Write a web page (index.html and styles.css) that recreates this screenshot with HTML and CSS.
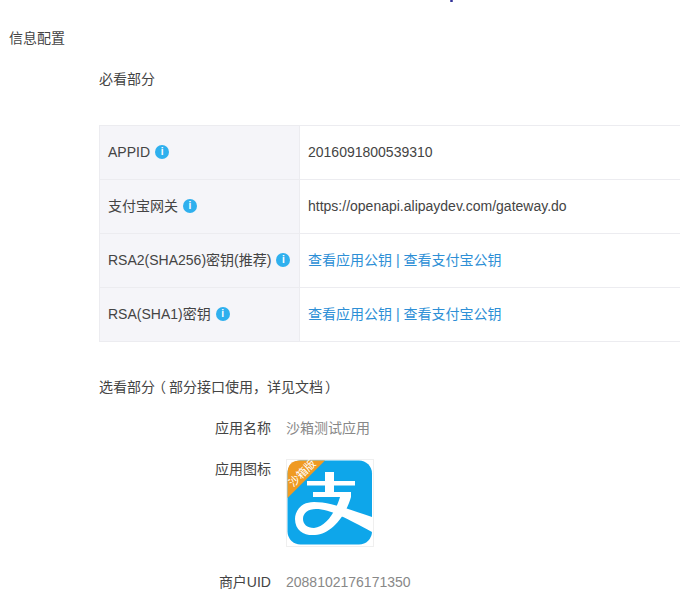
FILE: index.html
```html
<!DOCTYPE html>
<html lang="zh">
<head>
<meta charset="utf-8">
<title>信息配置</title>
<link rel="stylesheet" href="styles.css">
</head>
<body>
<div class="speck"></div>
<h1 class="page-title">信息配置</h1>
<main class="content">
  <h2 class="section-title">必看部分</h2>
  <div class="table">
    <div class="row">
      <div class="label">APPID <span class="info">i</span></div>
      <div class="value">2016091800539310</div>
    </div>
    <div class="row">
      <div class="label">支付宝网关 <span class="info">i</span></div>
      <div class="value">https://openapi.alipaydev.com/gateway.do</div>
    </div>
    <div class="row">
      <div class="label">RSA2(SHA256)密钥(推荐) <span class="info">i</span></div>
      <div class="value link">查看应用公钥 | 查看支付宝公钥</div>
    </div>
    <div class="row">
      <div class="label">RSA(SHA1)密钥 <span class="info">i</span></div>
      <div class="value link">查看应用公钥 | 查看支付宝公钥</div>
    </div>
  </div>
  <h2 class="section-title optional">选看部分<span class="paren-open">（</span>部分接口使用，详见文档<span class="paren-close">）</span></h2>
  <div class="form">
    <div class="form-label">应用名称</div>
    <div class="form-value">沙箱测试应用</div>
    <div class="form-label icon-label">应用图标</div>
    <div class="app-icon">
      <svg width="88" height="88" viewBox="0 0 88 88" aria-hidden="true">
        <rect x="0.5" y="0.5" width="87" height="87" fill="#fff" stroke="#efefef"/>
        <rect x="1.5" y="1.5" width="84.5" height="84" rx="13" fill="#0ea6ea"/>
        <path d="M1.5 39 L39 1.5 H14.5 Q1.5 1.5 1.5 14.5 Z" fill="#ef9a22"/>
        <path d="M39 13 H48 V22 H69 V26.5 H48 V33 H65 V38 C60 56 46 75 29 76 C19 77 9 72 9 60 C9 53 14 43 28 43 C44 43 62 50 86 58 V73 C62 60 44 50 30 50 C22 50 17 54 17 60 C17 65 21 69 28 69 C40 68 50 52 54 38 H27 V33 H39 V26.5 H21 V22 H39 Z" fill="#fff"/>
      </svg>
      <span class="sandbox-tag">沙箱版</span>
    </div>
    <div class="form-label">商户UID</div>
    <div class="form-value">2088102176171350</div>
  </div>
</main>
</body>
</html>
```
FILE: styles.css
```css
html, body {
  margin: 0;
  padding: 0;
  height: 596px;
  overflow: hidden;
  background: #fff;
}
body {
  position: relative;
  font-family: "Liberation Sans", "Noto Sans CJK SC", sans-serif;
  font-size: 14px;
  line-height: 20px;
  color: #444;
}
.speck {
  position: absolute;
  left: 450px;
  top: 0;
  width: 3px;
  height: 2px;
  border-radius: 1px;
  background: #33339a;
}
.page-title {
  margin: 0;
  padding: 28px 0 0 9px;
  font-size: 14px;
  line-height: 20px;
  font-weight: 400;
}
.content {
  padding-left: 99px;
}
.section-title {
  margin: 0;
  padding-top: 21px;
  font-size: 14px;
  line-height: 20px;
  font-weight: 400;
}
.paren-open {
  font-feature-settings: "halt";
  margin-left: 4px;
  margin-right: 3px;
}
.paren-close {
  margin-left: 2px;
}
.table {
  margin-top: 36px;
  width: 600px;
  border: 1px solid #ececf0;
  border-right: 0;
  box-sizing: border-box;
  display: flex;
  flex-direction: column;
}
.row {
  display: flex;
  height: 54px;
  box-sizing: border-box;
  border-bottom: 1px solid #ececf0;
}
.row:last-child {
  height: 53px;
  border-bottom: 0;
}
.label {
  flex: 0 0 200px;
  box-sizing: border-box;
  display: flex;
  align-items: center;
  gap: 5px;
  padding: 0 0 2px 8px;
  background: #f5f5f9;
  border-right: 1px solid #ececf0;
  white-space: nowrap;
}
.value {
  display: flex;
  align-items: center;
  padding: 0 0 2px 8px;
  white-space: nowrap;
}
.value.link {
  color: #2d8fd6;
}
.info {
  flex: none;
  width: 14px;
  height: 14px;
  border-radius: 50%;
  background: #2fb0ee;
  color: #fff;
  font-size: 10px;
  font-weight: 700;
  line-height: 14px;
  text-align: center;
}
.optional {
  padding-top: 35px;
}
.form {
  display: grid;
  grid-template-columns: 172px 1fr;
  column-gap: 15px;
  margin-top: 21px;
}
.form-label {
  text-align: right;
  height: 20px;
}
.form-value {
  color: #888;
}
.icon-label {
  margin-top: 21px;
}
.app-icon {
  position: relative;
  width: 88px;
  height: 88px;
  margin-top: 21px;
}
.app-icon svg {
  display: block;
}
.form > :nth-child(n+5) {
  margin-top: 25px;
}
.sandbox-tag {
  position: absolute;
  left: 0;
  top: 9px;
  width: 30px;
  color: #fff;
  font-size: 11px;
  line-height: 12px;
  text-align: center;
  white-space: nowrap;
  transform: rotate(-45deg);
}
```
